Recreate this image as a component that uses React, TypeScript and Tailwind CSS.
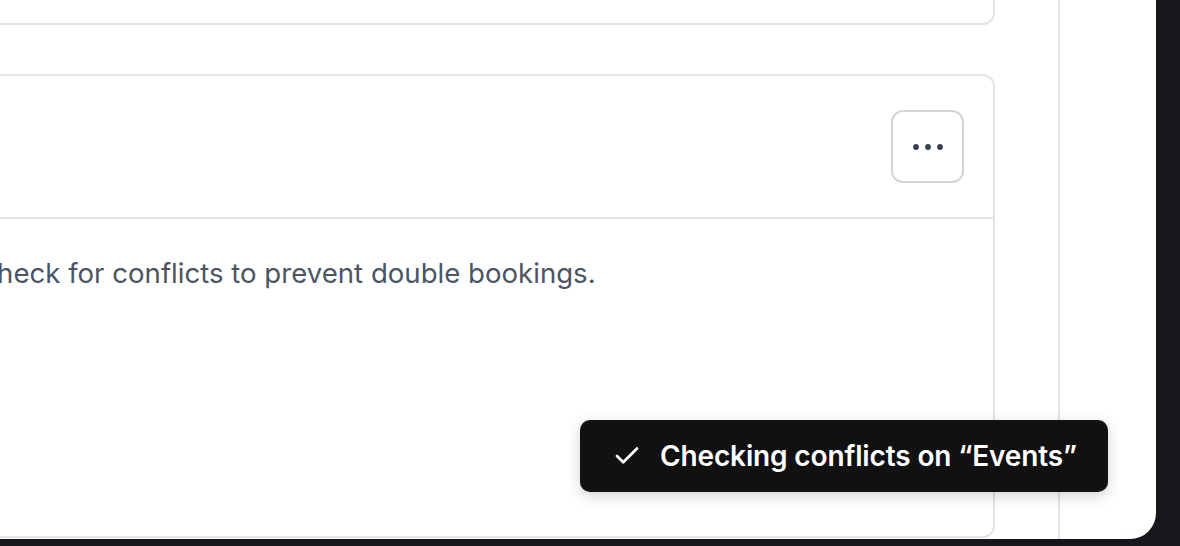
import { Check } from 'lucide-react';

const font = { fontFamily: 'Inter, "Noto Sans", sans-serif' };

function DotsButton() {
  return (
    <button className="w-[73px] h-[73px] rounded-[12px] border-2 border-[#d4d4d8] bg-white flex items-center justify-center shrink-0">
      <svg width="30" height="6" viewBox="0 0 30 6">
        <circle cx="3" cy="3" r="2.9" fill="#374151" />
        <circle cx="15" cy="3" r="2.9" fill="#374151" />
        <circle cx="27" cy="3" r="2.9" fill="#374151" />
      </svg>
    </button>
  );
}

function Toast() {
  return (
    <div className="absolute right-[48px] bottom-[47px] w-[528px] h-[72px] rounded-[10px] bg-[#111111] shadow-[0_4px_14px_rgba(0,0,0,0.18)] flex items-center pl-[32px] gap-[18px]">
      <Check size={30} strokeWidth={2.2} className="text-white shrink-0" />
      <span className="text-[28px] font-semibold text-white leading-none tracking-[-0.005em]">
        Checking conflicts on “Events”
      </span>
    </div>
  );
}

export default function App() {
  return (
    <div className="w-[1180px] h-[546px] bg-[#16171b] overflow-hidden" style={font}>
      <div className="relative w-[1156px] h-[539px] bg-white rounded-br-[26px] overflow-hidden flex">
        {/* main column */}
        <div className="-ml-[500px] w-[1560px] shrink-0 border-r-2 border-[#e4e4e7] pr-[63px] flex flex-col gap-[49px]">
          <div className="-mt-[175px] h-[200px] rounded-[12px] border-2 border-[#e4e4e7] bg-white" />
          <div className="h-[464px] rounded-[12px] border-2 border-[#e4e4e7] bg-white flex flex-col">
            <div className="h-[143px] border-b-2 border-[#e4e4e7] flex items-center justify-end pr-[29px]">
              <DotsButton />
            </div>
            <div className="pt-[34px] pl-[295px]">
              <p className="text-[27.6px] leading-[40px] text-[#4b5563]">
                Automatically check for conflicts to prevent double bookings.
              </p>
            </div>
          </div>
        </div>
        {/* right rail */}
        <div className="flex-1" />
        <Toast />
      </div>
    </div>
  );
}
